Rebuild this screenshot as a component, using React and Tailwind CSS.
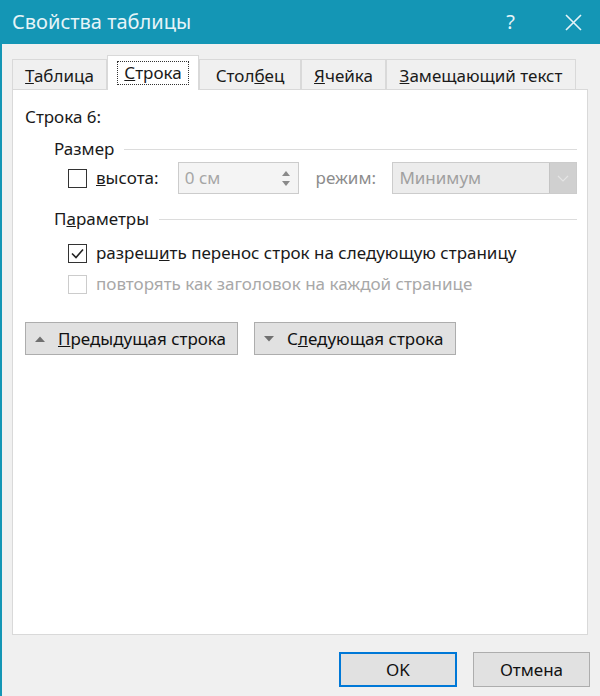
import React from 'react'

const font = { fontFamily: '"Noto Sans", "Open Sans", sans-serif' }

function Check({ checked, disabled }) {
  return (
    <span
      className={`flex h-[19px] w-[19px] shrink-0 items-center justify-center border-[1.5px] bg-white ${
        disabled ? 'border-[#cccccc]' : 'border-[#333333]'
      }`}
    >
      {checked && (
        <svg width="15" height="15" viewBox="0 0 15 15">
          <path d="M2 7.5 L6 11.5 L13 3.5" fill="none" stroke="#222" strokeWidth="1.6" />
        </svg>
      )}
    </span>
  )
}

function Tab({ children, w, active }) {
  if (active) {
    return (
      <div
        className={`${w} relative z-10 -mb-px flex h-[35px] items-center justify-center border border-b-0 border-[#d9d9d9] bg-white`}
      >
        <span className="border border-dotted border-[#333] px-[6px] leading-[22px]">{children}</span>
      </div>
    )
  }
  return (
    <div
      className={`${w} flex h-[30px] items-center justify-center border border-b-0 border-[#d9d9d9] bg-[#f0f0f0] pt-[2px]`}
    >
      {children}
    </div>
  )
}

function GroupLabel({ children, className }) {
  return (
    <div className={`flex h-[22px] items-center pl-[29px] ${className}`}>
      <span>{children}</span>
      <div className="ml-[10px] h-px flex-1 bg-[#dcdcdc]" />
    </div>
  )
}

function NavButton({ up, children, w }) {
  return (
    <button className={`${w} flex h-[33px] items-center border border-[#adadad] bg-[#e1e1e1] pl-[8px] text-[#111]`}>
      <svg width="12" height="8" viewBox="0 0 12 8" className="mr-[12px]">
        {up ? <path d="M1 7 L6 1.5 L11 7 Z" fill="#707070" /> : <path d="M1 1 L6 6.5 L11 1 Z" fill="#707070" />}
      </svg>
      <span>{children}</span>
    </button>
  )
}

export default function App() {
  return (
    <div
      className="flex h-[696px] w-[600px] flex-col overflow-hidden border-l-2 border-[#1496b5] bg-[#f0f0f0] text-[17px] text-[#1a1a1a]"
      style={font}
    >
      {/* title bar */}
      <div className="flex h-[44px] shrink-0 items-center bg-[#1496b5] pl-[10px] pr-[18px] text-[#e6f4f8]">
        <span className="text-[20px]">Свойства таблицы</span>
        <span className="ml-auto mr-[50px] text-[20px]">?</span>
        <svg width="17" height="17" viewBox="0 0 17 17">
          <path d="M1 1 L16 16 M16 1 L1 16" stroke="#e6f4f8" strokeWidth="1.6" />
        </svg>
      </div>

      {/* tabs */}
      <div className="flex h-[45px] shrink-0 items-end pl-[10px] pt-[10px]">
        <Tab w="w-[95px]">
          <span><u>Т</u>аблица</span>
        </Tab>
        <Tab w="w-[92px]" active>
          <span><u>С</u>трока</span>
        </Tab>
        <Tab w="w-[102px]">
          <span>Стол<u>б</u>ец</span>
        </Tab>
        <Tab w="w-[85px]">
          <span><u>Я</u>чейка</span>
        </Tab>
        <Tab w="w-[190px]">
          <span><u>З</u>амещающий текст</span>
        </Tab>
      </div>

      {/* panel */}
      <div className="ml-[10px] mr-[12px] flex h-[546px] shrink-0 flex-col border border-[#d9d9d9] bg-white pl-[12px] pr-[10px]">
        <div className="mt-[16px] flex h-[22px] items-center">Строка 6:</div>

        <GroupLabel className="mt-[10px]">Размер</GroupLabel>

        <div className="mt-[2px] flex h-[32px] items-center pl-[43px]">
          <Check />
          <span className="ml-[9px] w-[82px]">
            <u>в</u>ысота:
          </span>
          <div className="flex h-[32px] w-[121px] items-center border border-[#cccccc] bg-[#f4f4f4] pl-[6px] text-[#a6a6a6]">
            <span>0 см</span>
            <div className="ml-auto flex h-full w-[24px] flex-col items-center justify-center gap-[5px]">
              <svg width="8" height="5" viewBox="0 0 8 5">
                <path d="M0 5 L4 0 L8 5 Z" fill="#8a8a8a" />
              </svg>
              <svg width="8" height="5" viewBox="0 0 8 5">
                <path d="M0 0 L4 5 L8 0 Z" fill="#8a8a8a" />
              </svg>
            </div>
          </div>
          <span className="ml-[17px] w-[77px] text-[#8c8c8c]">режим:</span>
          <div className="flex h-[32px] w-[185px] items-center border border-[#cccccc] bg-[#ececec] text-[#a0a0a0]">
            <span className="pl-[6px]">Минимум</span>
            <div className="ml-auto flex h-full w-[27px] items-center justify-center border-l border-[#c4c4c4] bg-[#d0d0d0]">
              <svg width="12" height="7" viewBox="0 0 12 7">
                <path d="M1 1 L6 6 L11 1" fill="none" stroke="#e4e4e4" strokeWidth="1.2" />
              </svg>
            </div>
          </div>
        </div>

        <GroupLabel className="mt-[14px]">
          П<u>а</u>раметры
        </GroupLabel>

        <div className="mt-[12px] flex h-[22px] items-center pl-[43px]">
          <Check checked />
          <span className="ml-[9px]">
            разреш<u>и</u>ть перенос строк на следующую страницу
          </span>
        </div>
        <div className="mt-[9px] flex h-[22px] items-center pl-[43px]">
          <Check disabled />
          <span className="ml-[9px] text-[#a8a8a8]">повторять как заголовок на каждой странице</span>
        </div>

        <div className="mt-[27px] flex gap-[16px]">
          <NavButton up w="w-[213px]">
            <u>П</u>редыдущая строка
          </NavButton>
          <NavButton w="w-[202px]">
            С<u>л</u>едующая строка
          </NavButton>
        </div>
      </div>

      {/* footer */}
      <div className="flex justify-end gap-[16px] pr-[10px] pt-[17px]">
        <button className="flex h-[35px] w-[118px] items-center justify-center border-2 border-[#0078d7] bg-[#e1e1e1] text-[#111]">
          OK
        </button>
        <button className="flex h-[35px] w-[117px] items-center justify-center border border-[#adadad] bg-[#e1e1e1] text-[#111]">
          Отмена
        </button>
      </div>
    </div>
  )
}
